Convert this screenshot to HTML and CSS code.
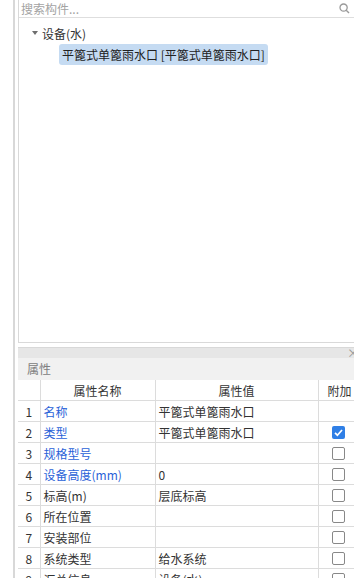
FILE: index.html
```html
<!DOCTYPE html>
<html lang="zh">
<head>
    <title>构件属性</title>
    <link rel="stylesheet" href="styles.css">
</head>
<body>
    <div class="page">
        <div class="rail"></div>
        <div class="main">
            <div class="tree-panel">
                <div class="search">
                    <span class="search-text">搜索构件...</span>
                    <svg class="search-icon" width="11" height="11" viewBox="0 0 11 11">
                        <circle cx="4.6" cy="4.6" r="3.6" fill="none" stroke="#9a9a9a" stroke-width="1.3"/>
                        <line x1="7.2" y1="7.2" x2="10" y2="10" stroke="#9a9a9a" stroke-width="1.4"/>
                    </svg>
                </div>
                <div class="tree">
                    <div class="tree-node">
                        <span class="arrow"></span>
                        <span>设备(水)</span>
                    </div>
                    <div class="tree-leaf">
                        <span class="selected">平篦式单篦雨水口 [平篦式单篦雨水口]</span>
                    </div>
                </div>
            </div>

            <div class="props-panel">
                <div class="bar"><span class="close">×</span></div>
                <div class="props-title">属性</div>
                <table class="props">
                    <colgroup>
                        <col class="c-num">
                        <col class="c-name">
                        <col class="c-value">
                        <col class="c-extra">
                    </colgroup>
                    <tr class="head">
                        <td class="num"></td>
                        <td class="name">属性名称</td>
                        <td class="value">属性值</td>
                        <td class="extra">附加</td>
                    </tr>
                    <tr>
                        <td class="num">1</td>
                        <td class="name blue">名称</td>
                        <td class="value">平篦式单篦雨水口</td>
                        <td class="extra"></td>
                    </tr>
                    <tr>
                        <td class="num">2</td>
                        <td class="name blue">类型</td>
                        <td class="value">平篦式单篦雨水口</td>
                        <td class="extra"><span class="check on">
                            <svg width="13" height="13" viewBox="0 0 13 13"><path d="M3 6.8 L5.4 9.2 L10 4" fill="none" stroke="#fff" stroke-width="1.7"/></svg>
                        </span></td>
                    </tr>
                    <tr>
                        <td class="num">3</td>
                        <td class="name blue">规格型号</td>
                        <td class="value"></td>
                        <td class="extra"><span class="check"></span></td>
                    </tr>
                    <tr>
                        <td class="num">4</td>
                        <td class="name blue">设备高度(mm)</td>
                        <td class="value">0</td>
                        <td class="extra"><span class="check"></span></td>
                    </tr>
                    <tr>
                        <td class="num">5</td>
                        <td class="name">标高(m)</td>
                        <td class="value">层底标高</td>
                        <td class="extra"><span class="check"></span></td>
                    </tr>
                    <tr>
                        <td class="num">6</td>
                        <td class="name">所在位置</td>
                        <td class="value"></td>
                        <td class="extra"><span class="check"></span></td>
                    </tr>
                    <tr>
                        <td class="num">7</td>
                        <td class="name">安装部位</td>
                        <td class="value"></td>
                        <td class="extra"><span class="check"></span></td>
                    </tr>
                    <tr>
                        <td class="num">8</td>
                        <td class="name">系统类型</td>
                        <td class="value">给水系统</td>
                        <td class="extra"><span class="check"></span></td>
                    </tr>
                    <tr>
                        <td class="num">9</td>
                        <td class="name">汇总信息</td>
                        <td class="value">设备(水)</td>
                        <td class="extra"><span class="check"></span></td>
                    </tr>
                </table>
            </div>
        </div>
    </div>
</body>
</html>
```

FILE: styles.css
```css
body {
    margin: 0;
    height: 578px;
    overflow: hidden;
    background-color: white;
    font-family: "Noto Sans CJK SC", "Noto Sans", sans-serif;
    font-size: 12px;
    color: #333;
}

.page {
    display: flex;
    height: 578px;
}

.rail {
    width: 13px;
    flex-shrink: 0;
    border-right: 2px solid #d8d8d8;
    margin-right: 3px;
}

.main {
    flex: 1;
    min-width: 0;
}

.tree-panel {
    height: 342px;
    border-left: 1px solid #d9d9d9;
    border-bottom: 1px solid #d9d9d9;
}

.search {
    height: 17px;
    border-bottom: 1px solid #dedede;
    display: flex;
    align-items: center;
    padding-left: 2px;
    padding-right: 4px;
}

.search-text {
    flex: 1;
    color: #a3a3a3;
    line-height: 17px;
}

.search-icon {
    margin-top: -1px;
}

.tree {
    padding-top: 5px;
}

.tree-node {
    display: flex;
    align-items: center;
    height: 20px;
    padding-left: 13px;
}

.arrow {
    width: 0;
    height: 0;
    border-left: 3px solid transparent;
    border-right: 3px solid transparent;
    border-top: 4px solid #6e6e6e;
    margin-right: 4px;
}

.tree-leaf {
    padding-left: 40px;
    margin-top: 1px;
}

.selected {
    display: inline-block;
    background-color: #c5dbf2;
    border-radius: 3px;
    padding: 0 3px;
    height: 21px;
    line-height: 21px;
    color: #222;
}

.props-panel {
    margin-top: 4px;
}

.bar {
    height: 10px;
    background-color: #e6e6e6;
    border-top: 1px solid #d8d8d8;
    position: relative;
}

.close {
    position: absolute;
    right: -5px;
    top: -4px;
    font-size: 12px;
    color: #999;
}

.props-title {
    height: 22px;
    line-height: 22px;
    background-color: #f1f1f1;
    color: #808080;
    padding-left: 9px;
}

.props {
    border-collapse: collapse;
    table-layout: fixed;
    width: 343px;
}

.c-num {
    width: 22px;
}

.c-name {
    width: 115px;
}

.c-value {
    width: 163px;
}

.c-extra {
    width: 43px;
}

.props td {
    border: 1px solid #dcdcdc;
    height: 20px;
    padding: 0;
    white-space: nowrap;
    overflow: hidden;
}

.props tr:first-child td {
    border-top: none;
}

.props td.num {
    text-align: center;
    border-left: none;
}

.props td.name {
    padding-left: 3px;
}

.props td.value {
    padding-left: 3px;
}

.props td.extra {
    padding-left: 9px;
}

.props .head td {
    text-align: center;
    padding-left: 0;
}

.props .head td.extra {
    text-align: left;
    padding-left: 9px;
}

.blue {
    color: #2a62d8;
}

.check {
    display: block;
    width: 11px;
    height: 11px;
    border: 1px solid #888;
    border-radius: 2px;
    margin-left: 4px;
}

.check.on {
    width: 13px;
    height: 13px;
    border: none;
    background-color: #2f7fe6;
}

.check svg {
    display: block;
}
```
